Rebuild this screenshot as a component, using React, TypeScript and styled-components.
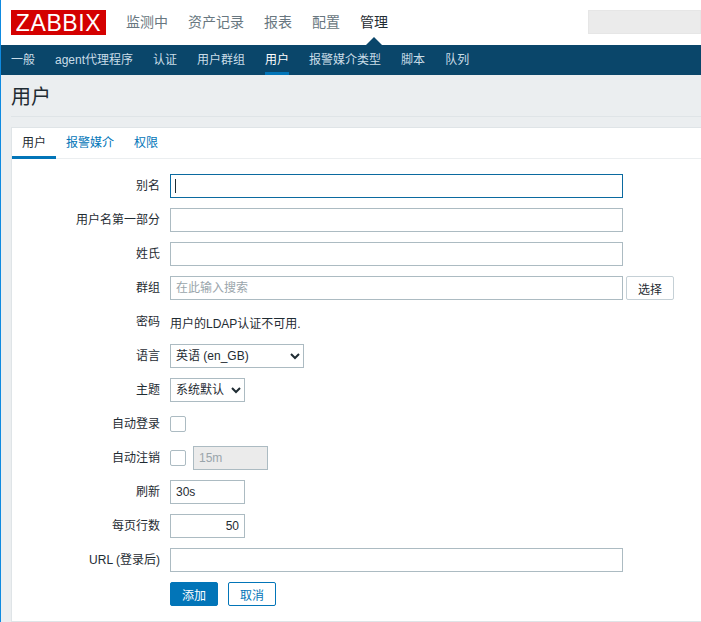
import React from "react"
import styled, { createGlobalStyle } from "styled-components"

const FONT = `"Liberation Sans", "Noto Sans CJK SC", sans-serif`

const GlobalStyle = createGlobalStyle`
  html, body {
    margin: 0;
    padding: 0;
    height: 100%;
    overflow: hidden;
    background: #ebeef0;
  }
  * { box-sizing: border-box; }
`

const Page = styled.div`
  height: 622px;
  border-left: 1px solid #0f8ae0;
  font-family: ${FONT};
  font-size: 12px;
  color: #1f2c33;
  overflow: hidden;
`

const TopBar = styled.div`
  height: 45px;
  background: #fff;
  display: flex;
  align-items: center;
  padding-left: 10px;
  position: relative;
`

const Logo = styled.div`
  width: 95px;
  height: 25px;
  background: #d40000;
  color: #fff;
  font-size: 23px;
  line-height: 26px;
  letter-spacing: 0.6px;
  text-align: center;
  margin-right: 10px;
  flex: none;
`

const TopItem = styled.a<{ $active?: boolean }>`
  font-size: 14px;
  line-height: 45px;
  padding: 0 10px;
  color: ${p => (p.$active ? "#1f2c33" : "#687780")};
  position: relative;
  &::after {
    content: "";
    display: ${p => (p.$active ? "block" : "none")};
    position: absolute;
    left: 50%;
    bottom: 0;
    margin-left: -8px;
    border: 8px solid transparent;
    border-top: 0;
    border-bottom-color: #0a466a;
  }
`

const SearchStub = styled.div`
  margin-left: auto;
  width: 113px;
  height: 24px;
  margin-top: -1px;
  background: #ebebeb;
  border: 1px solid #e6e6e6;
`

const SubBar = styled.div`
  height: 30px;
  background: #0a466a;
  display: flex;
  padding-left: 10px;
  gap: 20px;
`

const SubItem = styled.a<{ $active?: boolean }>`
  line-height: 30px;
  height: 30px;
  color: ${p => (p.$active ? "#fff" : "#c9dde8")};
  border-bottom: 3px solid ${p => (p.$active ? "#0275b8" : "transparent")};
`

const TitleBand = styled.div`
  height: 42px;
  margin-left: 10px;
  border-bottom: 1px solid #dfe4e7;
`

const Title = styled.h1`
  margin: 0;
  font-size: 20px;
  font-weight: 400;
  line-height: 45px;
`

const Card = styled.div`
  margin: 10px 0 0 10px;
  height: 495px;
  background: #fff;
  border: 1px solid #dfe4e7;
  border-right: 0;
`

const Tabs = styled.div`
  height: 31px;
  display: flex;
  border-bottom: 1px solid #ebeef0;
`

const Tab = styled.a<{ $active?: boolean }>`
  padding: 0 10px;
  height: 31px;
  line-height: 31px;
  color: ${p => (p.$active ? "#1f2c33" : "#0275b8")};
  border-bottom: 3px solid ${p => (p.$active ? "#0275b8" : "transparent")};
`

const Form = styled.div`
  display: grid;
  grid-template-columns: 148px 1fr;
  column-gap: 10px;
  row-gap: 10px;
  padding-top: 15px;
`

const Label = styled.label`
  height: 24px;
  line-height: 24px;
  text-align: right;
`

const Field = styled.div`
  height: 24px;
  display: flex;
  align-items: center;
  position: relative;
`

const Input = styled.input<{ $w?: number; $right?: boolean; $focus?: boolean }>`
  width: ${p => p.$w ?? 453}px;
  height: 24px;
  padding: 0 5px;
  font-family: ${FONT};
  font-size: 12px;
  color: #1f2c33;
  background: #fff;
  border: 1px solid ${p => (p.$focus ? "#0b6aa0" : "#acbbc2")};
  border-radius: 0;
  outline: 0;
  text-align: ${p => (p.$right ? "right" : "left")};
  &::placeholder { color: #9aa5ab; opacity: 1; }
  &:disabled {
    background: #ebebeb;
    color: #9aa5ab;
    margin-left: 7px;
  }
`

const Caret = styled.span`
  position: absolute;
  left: 5px;
  top: 5px;
  width: 1px;
  height: 14px;
  background: #1f2c33;
`

const Select = styled.select<{ $w: number }>`
  width: ${p => p.$w}px;
  height: 24px;
  font-family: ${FONT};
  font-size: 12px;
  color: #1f2c33;
  background: #fff;
  border: 1px solid #acbbc2;
  border-radius: 0;
  padding: 0 1px;
  outline: 0;
`

const Check = styled.span`
  display: block;
  width: 16px;
  height: 16px;
  background: #fff;
  border: 1px solid #acbbc2;
  border-radius: 2px;
`

const PickButton = styled.button`
  width: 48px;
  height: 24px;
  margin-left: 3px;
  padding: 0;
  font-family: ${FONT};
  font-size: 12px;
  color: #1f2c33;
  background: #fff;
  border: 1px solid #c5d0d6;
  border-radius: 2px;
`

const Actions = styled.div`
  display: flex;
  gap: 10px;
`

const Button = styled.button<{ $primary?: boolean }>`
  width: 48px;
  height: 24px;
  padding: 0;
  font-family: ${FONT};
  font-size: 12px;
  color: ${p => (p.$primary ? "#fff" : "#0275b8")};
  background: ${p => (p.$primary ? "#0275b8" : "#fff")};
  border: 1px solid #0275b8;
  border-radius: 2px;
`

const topItems = ["监测中", "资产记录", "报表", "配置", "管理"]
const subItems = ["一般", "agent代理程序", "认证", "用户群组", "用户", "报警媒介类型", "脚本", "队列"]
const tabs = ["用户", "报警媒介", "权限"]

export default function App() {
  return (
    <Page>
      <GlobalStyle />
      <TopBar>
        <Logo>ZABBIX</Logo>
        {topItems.map(t => (
          <TopItem key={t} $active={t === "管理"}>{t}</TopItem>
        ))}
        <SearchStub />
      </TopBar>
      <SubBar>
        {subItems.map(t => (
          <SubItem key={t} $active={t === "用户"}>{t}</SubItem>
        ))}
      </SubBar>
      <TitleBand>
        <Title>用户</Title>
      </TitleBand>
      <Card>
        <Tabs>
          {tabs.map(t => (
            <Tab key={t} $active={t === "用户"}>{t}</Tab>
          ))}
        </Tabs>
        <Form>
          <Label>别名</Label>
          <Field>
            <Input $focus readOnly />
            <Caret />
          </Field>

          <Label>用户名第一部分</Label>
          <Field><Input readOnly /></Field>

          <Label>姓氏</Label>
          <Field><Input readOnly /></Field>

          <Label>群组</Label>
          <Field>
            <Input placeholder="在此输入搜索" readOnly />
            <PickButton>选择</PickButton>
          </Field>

          <Label>密码</Label>
          <Field>用户的LDAP认证不可用.</Field>

          <Label>语言</Label>
          <Field>
            <Select $w={134} defaultValue="en_GB">
              <option value="en_GB">英语 (en_GB)</option>
            </Select>
          </Field>

          <Label>主题</Label>
          <Field>
            <Select $w={75} defaultValue="default">
              <option value="default">系统默认</option>
            </Select>
          </Field>

          <Label>自动登录</Label>
          <Field><Check /></Field>

          <Label>自动注销</Label>
          <Field>
            <Check />
            <Input $w={75} value="15m" disabled readOnly />
          </Field>

          <Label>刷新</Label>
          <Field><Input $w={75} value="30s" readOnly /></Field>

          <Label>每页行数</Label>
          <Field><Input $w={75} $right value="50" readOnly /></Field>

          <Label>URL (登录后)</Label>
          <Field><Input readOnly /></Field>

          <span />
          <Actions>
            <Button $primary>添加</Button>
            <Button>取消</Button>
          </Actions>
        </Form>
      </Card>
    </Page>
  )
}
